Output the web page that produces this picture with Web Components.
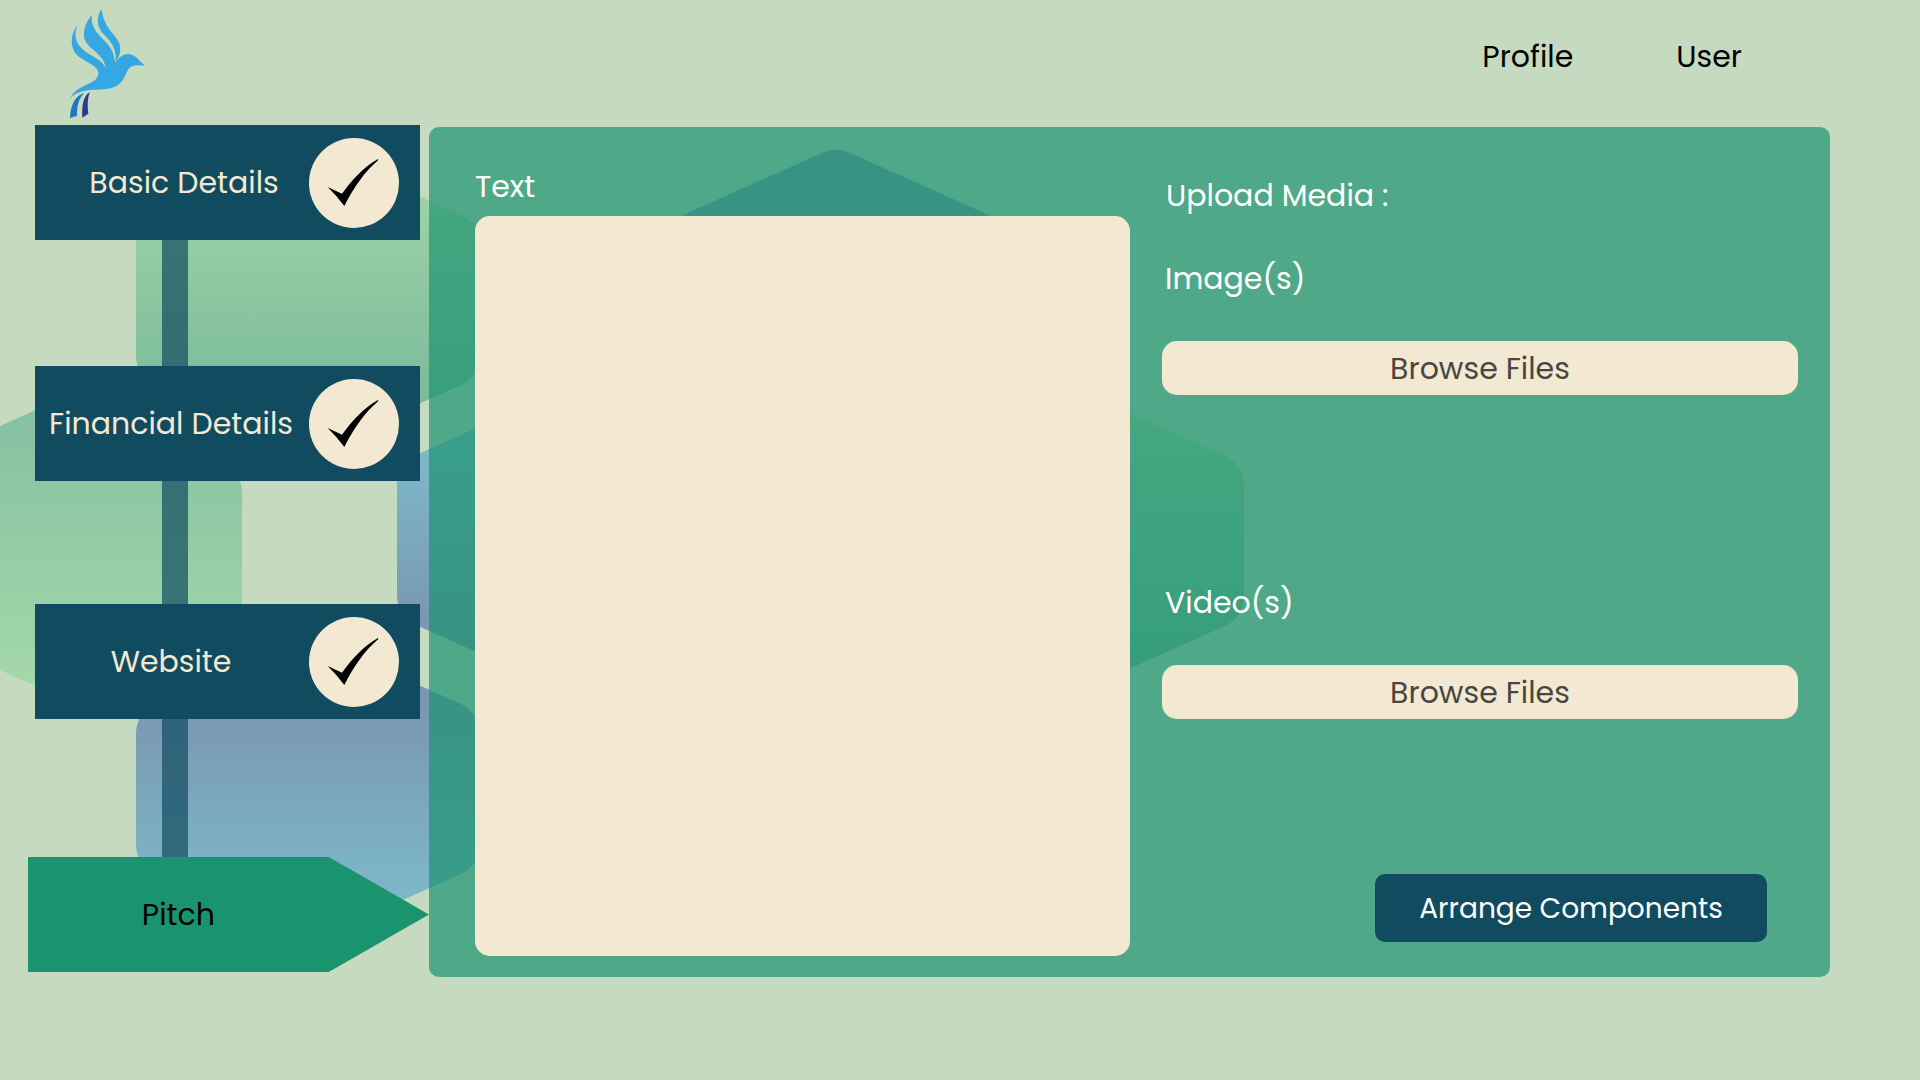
<!DOCTYPE html>
<html lang="en">
<head>
<meta charset="utf-8">
<meta name="viewport" content="width=device-width, initial-scale=1">
<title>Pitch</title>
<style>
:root {
  --navy: #114b5f; --green: #1a936f; --sage: #c6dabf; --cream: #f3e9d2;
}
html, body { margin: 0; }
body { background: var(--sage); color: #000; font: 400 30px/40px Poppins, Inter, "Open Sans", sans-serif; }
</style>
</head>
<body>
<pitch-page></pitch-page>

<script>
const define = (name, html) => customElements.define(name, class extends HTMLElement {
  constructor() {
    super();
    const t = document.createElement('template');
    t.innerHTML = html;
    this.attachShadow({ mode: 'open' }).append(t.content.cloneNode(true));
  }
});

define('hex-backdrop', `
<style>
:host { position: absolute; inset: 0; overflow: hidden; z-index: -1; }
svg { display: block; width: 100%; height: 100%; }
</style>
<svg aria-hidden="true">
  <defs>
    <linearGradient id="g" x1="0" y1="0" x2="0" y2="1"><stop offset="0" stop-color="#a5d8a8"/><stop offset="1" stop-color="#72b498"/></linearGradient>
    <linearGradient id="gr" x1="0" y1="0" x2="0" y2="1"><stop offset="0" stop-color="#84bfa2"/><stop offset="1" stop-color="#a6d9a9"/></linearGradient>
    <linearGradient id="b" x1="0" y1="0" x2="0" y2="1"><stop offset="0" stop-color="#7fbccf"/><stop offset=".33" stop-color="#7db2c6"/><stop offset=".75" stop-color="#7a98b4"/><stop offset="1" stop-color="#7892b0"/></linearGradient>
    <linearGradient id="br" x1="0" y1="0" x2="0" y2="1"><stop offset="0" stop-color="#7892b0"/><stop offset=".25" stop-color="#7a98b4"/><stop offset=".67" stop-color="#7caec3"/><stop offset="1" stop-color="#7fbccf"/></linearGradient>
    <path id="hex" d="M-12-148A30 30 0 0 1 12-148L153-85A32 32 0 0 1 172-56V56A32 32 0 0 1 153 85L12 148A30 30 0 0 1-12 148L-153 85A32 32 0 0 1-172 56V-56A32 32 0 0 1-153-85Z"/>
  </defs>
  <use href="#hex" x="308" y="300" fill="url(#g)"/>
  <use href="#hex" x="70" y="548" fill="url(#gr)"/>
  <use href="#hex" x="569" y="540" fill="url(#b)"/>
  <use href="#hex" x="836" y="300" fill="url(#br)"/>
  <use href="#hex" x="1072" y="541" fill="url(#g)"/>
  <use href="#hex" x="308" y="789" fill="url(#br)"/>
</svg>`);

define('bird-logo', `
<style>:host { display: block; width: 78px; height: 110px; } svg { display: block; width: 100%; height: 100%; }</style>
<svg viewBox="144 24 234 330" role="img" aria-label="Bird logo">
  <g fill="#35a7e2">
    <path d="M245 27C227 54 232 80 247 98C268 120 292 142 286 184C300 172 304 150 298 130C288 103 250 84 245 27Z"/>
    <path d="M215 46C197 68 189 90 193 114C201 148 251 158 258 206C247 176 212 170 187 147C166 128 161 102 173 76C153 99 151 130 162 153C177 183 232 190 235 218C235 256 174 249 151 293C180 268 215 270 252 268C290 266 307 248 318 222C327 196 341 193 375 197C359 186 347 163 325 162C309 161 297 174 286 186L283 180C281 120 210 112 215 46Z"/>
  </g>
  <path d="M193 279C165 286 151 318 150 354L171 347C170 316 178 292 193 279Z" fill="#1f78bf"/>
  <path d="M209 276C190 289 185 315 187 353L205 341C202 319 202 296 209 276Z" fill="#2b3990"/>
</svg>`);

define('top-bar', `
<style>
:host { display: block; }
header { display: flex; justify-content: space-between; align-items: flex-start; height: 117px; padding: 8px 178px 0 68px; }
nav { display: flex; gap: 103px; padding-top: 29px; }
</style>
<header><bird-logo></bird-logo><nav aria-label="Account"><slot></slot></nav></header>`);

define('nav-link', `
<style>:host { display: block; } a { color: inherit; text-decoration: none; }</style>
<a href="#"><slot></slot></a>`);

define('step-done', `
<style>
:host { display: block; margin: 0 9px 0 7px; }
a { box-sizing: border-box; display: flex; align-items: center; height: 100%; padding-right: 21px;
    background: var(--navy); color: var(--cream); text-decoration: none; white-space: nowrap; }
.label { flex: 1; text-align: center; padding: 1px 0 0 var(--label-inset, 0); }
.badge { width: 90px; height: 90px; margin-left: 2px; border-radius: 50%; background: var(--cream); }
svg { display: block; }
</style>
<a href="#"><span class="label"><slot></slot></span>
<span class="badge"><svg width="90" height="90" viewBox="0 0 270 270" role="img" aria-label="Done">
<path d="M56 147L99 167C128 127 163 88 207 63L208 66C166 102 135 147 106 204Q84 174 56 147Z"/></svg></span></a>`);

define('step-link', `
<style>:host { display: block; width: 26px; margin-left: 134px; background: var(--navy); opacity: .7; }</style>`);

define('step-current', `
<style>
:host { display: block; }
a { display: flex; align-items: center; height: 100%; background: var(--green); color: #000; text-decoration: none;
    clip-path: polygon(0 0, 75% 0, 100% 50%, 75% 100%, 0 100%); }
.label { width: 75%; text-align: center; }
</style>
<a href="#" aria-current="step"><span class="label"><slot></slot></span></a>`);

define('step-list', `
<style>
:host { display: block; flex: none; width: 401px; }
nav { display: grid; grid-template-rows: 115px 126px 115px 123px 115px 138px 115px; }
</style>
<nav aria-label="Steps"><slot></slot></nav>`);

define('text-field', `
<style>
:host { display: flex; flex-direction: column; gap: 9px; padding-top: 40px; }
label { color: #fff; }
textarea { box-sizing: border-box; width: 100%; height: 740px; margin: 0; padding: 20px; border: 0; border-radius: 15px;
  background: var(--cream); color: #000; font: inherit; resize: none; }
</style>
<label for="t"><slot></slot></label><textarea id="t"></textarea>`);

define('file-picker', `
<style>
:host { display: flex; flex-direction: column; gap: 42px; }
.name { padding-left: 3px; color: #fff; }
button { height: 54px; padding: 2px 0 0; border: 0; border-radius: 15px; background: var(--cream); color: #494640; font: inherit; cursor: pointer; }
</style>
<span class="name" id="n"><slot></slot></span><button type="button" aria-describedby="n">Browse Files</button>`);

define('action-button', `
<style>
:host { display: block; }
button { width: 392px; height: 68px; padding: 2px 0 0; border: 0; border-radius: 10px; background: var(--navy); color: #fff;
  font: inherit; font-size: 28px; white-space: nowrap; cursor: pointer; }
</style>
<button type="button"><slot></slot></button>`);

define('media-panel', `
<style>
:host { display: flex; flex-direction: column; padding-top: 49px; }
h2 { margin: 0 0 43px 4px; color: #fff; font: inherit; }
.pickers { display: flex; flex-direction: column; gap: 188px; }
action-button { align-self: flex-end; margin: auto 31px 14px 0; }
</style>
<h2>Upload Media :</h2>
<div class="pickers"><file-picker>Image(s)</file-picker><file-picker>Video(s)</file-picker></div>
<action-button>Arrange Components</action-button>`);

define('pitch-page', `
<style>
:host { display: block; position: relative; isolation: isolate; min-height: 100vh; }
.body { display: flex; align-items: flex-start; padding: 0 90px 0 28px; }
.panel { flex: 1; display: grid; grid-template-columns: 655fr 636fr; gap: 32px; margin-top: 2px; padding: 0 32px 21px 46px;
  border-radius: 10px; background: rgb(26 147 111 / .69); }
.wide { --label-inset: 26px; }
</style>
<hex-backdrop></hex-backdrop>
<top-bar><nav-link>Profile</nav-link><nav-link>User</nav-link></top-bar>
<div class="body">
  <step-list>
    <step-done class="wide">Basic Details</step-done><step-link></step-link>
    <step-done>Financial Details</step-done><step-link></step-link>
    <step-done>Website</step-done><step-link></step-link>
    <step-current>Pitch</step-current>
  </step-list>
  <main class="panel">
    <text-field>Text</text-field>
    <media-panel></media-panel>
  </main>
</div>`);
</script>
</body>
</html>
